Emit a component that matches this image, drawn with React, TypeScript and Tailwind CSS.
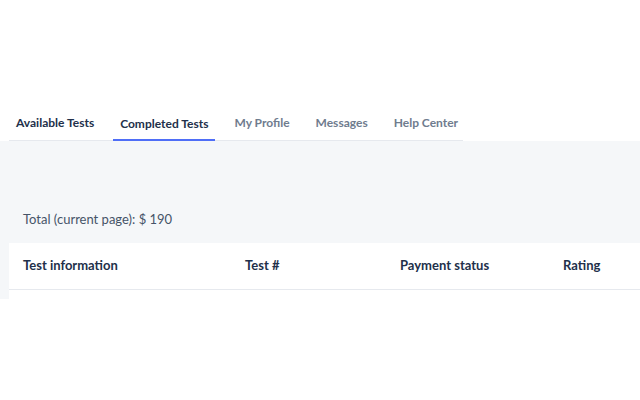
const tabs = [
  { label: "Available Tests", active: false, dark: true },
  { label: "Completed Tests", active: true, dark: true },
  { label: "My Profile", active: false, dark: false },
  { label: "Messages", active: false, dark: false },
  { label: "Help Center", active: false, dark: false },
];

const columns = [
  { label: "Test information", width: "w-[222px]" },
  { label: "Test #", width: "w-[155px]" },
  { label: "Payment status", width: "w-[163px]" },
  { label: "Rating", width: "w-[80px]" },
];

export default function App() {
  return (
    <div
      className="h-[400px] w-[640px] overflow-hidden bg-white"
      style={{ fontFamily: "Lato, 'Open Sans', sans-serif" }}
    >
      <div className="h-[105px]" />
      <nav className="ml-[9px] flex w-[454px] border-b border-[#e6e9ee]">
        {tabs.map((tab) => (
          <button
            key={tab.label}
            type="button"
            className={
              tab.active
                ? "-mb-px mr-[12px] shrink-0 whitespace-nowrap border-b-2 border-[#4f6ef7] px-[7px] pb-[6px] pt-[9px] text-[12px] font-bold text-[#22304a]"
                : tab.dark
                  ? "mr-[12px] shrink-0 whitespace-nowrap border-b-2 border-transparent px-[7px] pb-[6px] pt-[9px] text-[12px] font-bold text-[#22304a]"
                  : "mr-[12px] shrink-0 whitespace-nowrap border-b-2 border-transparent px-[7px] pb-[6px] pt-[9px] text-[12px] font-bold text-[#6f7c8e]"
            }
          >
            {tab.label}
          </button>
        ))}
      </nav>
      <div className="h-[158px] bg-[#f5f7f9] pl-[9px]">
        <div className="h-[102px] pl-[14px] pt-[69px] text-[13px] text-[#465468]">
          Total (current page): $ 190
        </div>
        <div className="h-[56px] bg-white">
          <div className="flex h-[47px] items-center border-b border-[#e6e9ee] pl-[14px]">
            {columns.map((col) => (
              <div
                key={col.label}
                className={`${col.width} shrink-0 text-[13px] font-bold text-[#22304a]`}
              >
                {col.label}
              </div>
            ))}
          </div>
        </div>
      </div>
    </div>
  );
}
